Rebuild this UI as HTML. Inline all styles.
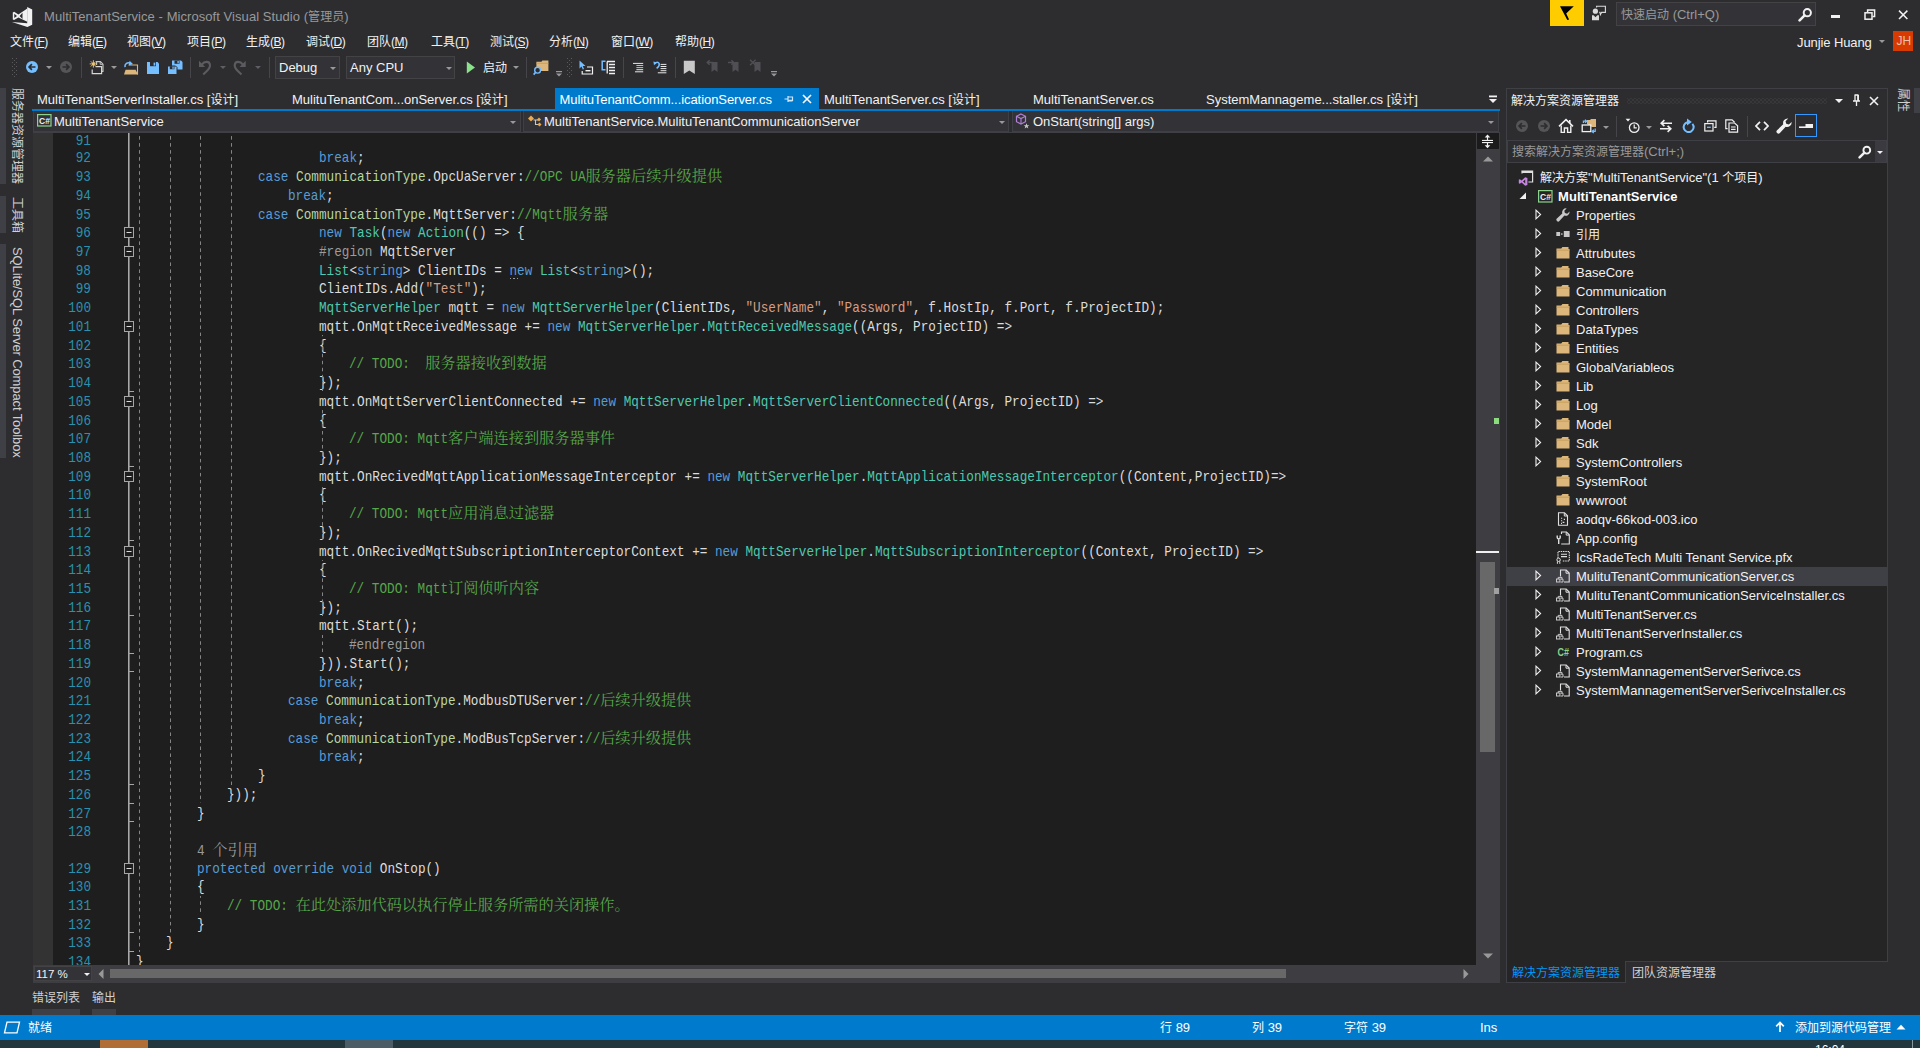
<!DOCTYPE html>
<html lang="zh-CN"><head><meta charset="utf-8"><title>MultiTenantService - Microsoft Visual Studio</title>
<style>
html,body{margin:0;padding:0}
body{width:1920px;height:1048px;overflow:hidden;position:relative;background:#2d2d30;
 font-family:"Liberation Sans","Noto Sans CJK SC",sans-serif;font-size:13px;color:#f1f1f1}
.t{position:absolute;white-space:pre;line-height:20px;height:20px}
.c{font-size:12px}
u{text-decoration:underline;text-underline-offset:1px}
#code{position:absolute;left:33px;top:133px;width:1443px;height:832px;background:#1e1e1e;overflow:hidden}
.ln{position:absolute;left:0;white-space:pre;font-family:"Liberation Mono","Noto Serif CJK SC",monospace;font-size:15px;
 line-height:19px;height:19px;transform:scaleX(0.846);transform-origin:0 0;color:#dcdcdc}

.c,.z{line-height:1px}
.ln .z{display:inline-block;font-family:"Liberation Mono","Noto Serif CJK SC","Noto Sans CJK SC",serif;font-size:15.2px;transform:scaleX(1.182);transform-origin:0 50%;white-space:pre}
.g{position:absolute;width:1px;background-image:linear-gradient(to bottom,#858585 0,#858585 3.6px,transparent 3.6px);background-size:1px 7.02px;background-repeat:repeat-y}
.no{position:absolute;white-space:pre;font-family:"Liberation Mono",monospace;font-size:15px;line-height:19px;height:19px;
 transform:scaleX(0.846);transform-origin:100% 0;color:#2b91af;text-align:right;width:60px}
.k{color:#569cd6}.y{color:#4ec9b0}.m{color:#57a64a}.s{color:#d69d85}.p{color:#9b9b9b}.e{color:#b8d7a3}
.row{position:absolute;left:0;width:379px;height:19px}
</style></head><body>

<!-- top -->
<svg style="position:absolute;left:0px;top:0px;" width="40" height="30" viewBox="0 0 40 30"><path fill="#f1f1f1" d="M27.2 6.9L32.2 9.4V24.7L27.4 26.9L11.9 22L27.2 23.3Z"/><path fill-rule="evenodd" fill="#f1f1f1" d="M27.3 8.4L18.4 14.5L14.1 11.8L12.8 12.5V19.4L14.1 20.1L18.4 17.4L27.3 21.8ZM22.5 12.8L19.6 15.9L22.5 19ZM14.3 13.7V18.1L17 15.9Z"/></svg>
<div class="t" style="left:44px;top:7px;color:#999999;font-size:13px;letter-spacing:0.06px">MultiTenantService - Microsoft Visual Studio (<span class="c">管理员</span>)</div>
<div style="position:absolute;left:1550px;top:0px;width:34px;height:26px;background:#ffcc00;"></div>
<svg style="position:absolute;left:1555px;top:0px;" width="24" height="26" viewBox="0 0 24 26"><path fill="#000000" d="M5 6.2H18.8L11.2 13.4L14.1 19.4L12.3 19.9Z"/></svg>
<svg style="position:absolute;left:1588px;top:0px;" width="22" height="26" viewBox="0 0 22 26"><circle cx="7.4" cy="11.2" r="2.6" fill="#dadada"/><path fill="#dadada" d="M4 15.2H5.6L7.5 17.2L9.4 15.2H11V20.2H4Z"/><path fill="none" stroke="#dadada" stroke-width="1.1" d="M8.6 7.6V6.3H17.4V12.4H13.6L12.4 14.6L12 12.4H11.2"/></svg>
<div style="position:absolute;left:1616px;top:2px;width:200px;height:24px;background:#333337;border:1px solid #434346;box-sizing:border-box;"></div>
<div class="t" style="left:1621px;top:5.3px;color:#999999;font-size:13px;"><span class="c">快速启动</span> (Ctrl+Q)</div>
<svg style="position:absolute;left:1798px;top:7px;" width="15" height="15" viewBox="0 0 15 15"><circle cx="9.3" cy="5.7" r="3.6" fill="none" stroke="#f1f1f1" stroke-width="2"/><path d="M6.6 8.4 L1.6 13.4" stroke="#f1f1f1" stroke-width="2.6" stroke-linecap="round"/></svg>
<div style="position:absolute;left:1831px;top:15px;width:9px;height:3px;background:#f1f1f1;"></div>
<svg style="position:absolute;left:1863.5px;top:9px;" width="12" height="12" viewBox="0 0 12 12"><path fill="none" stroke="#f1f1f1" stroke-width="1.5" d="M3.6 3V1H10.6V7.6H8.6"/><rect x="1" y="3.8" width="7" height="6.4" fill="none" stroke="#f1f1f1" stroke-width="1.5"/></svg>
<svg style="position:absolute;left:1897px;top:9px;" width="12" height="12" viewBox="0 0 12 12"><path d="M2 1.6 L10.4 10 M10.4 1.6 L2 10" stroke="#f1f1f1" stroke-width="1.5"/></svg>
<div class="t" style="left:10px;top:32px;color:#f1f1f1;font-size:12px;"><span class="c">文件</span><span style="letter-spacing:-0.5px">(<u>F</u>)</span></div>
<div class="t" style="left:68px;top:32px;color:#f1f1f1;font-size:12px;"><span class="c">编辑</span><span style="letter-spacing:-0.5px">(<u>E</u>)</span></div>
<div class="t" style="left:127px;top:32px;color:#f1f1f1;font-size:12px;"><span class="c">视图</span><span style="letter-spacing:-0.5px">(<u>V</u>)</span></div>
<div class="t" style="left:187px;top:32px;color:#f1f1f1;font-size:12px;"><span class="c">项目</span><span style="letter-spacing:-0.5px">(<u>P</u>)</span></div>
<div class="t" style="left:246px;top:32px;color:#f1f1f1;font-size:12px;"><span class="c">生成</span><span style="letter-spacing:-0.5px">(<u>B</u>)</span></div>
<div class="t" style="left:306px;top:32px;color:#f1f1f1;font-size:12px;"><span class="c">调试</span><span style="letter-spacing:-0.5px">(<u>D</u>)</span></div>
<div class="t" style="left:367px;top:32px;color:#f1f1f1;font-size:12px;"><span class="c">团队</span><span style="letter-spacing:-0.5px">(<u>M</u>)</span></div>
<div class="t" style="left:431px;top:32px;color:#f1f1f1;font-size:12px;"><span class="c">工具</span><span style="letter-spacing:-0.5px">(<u>T</u>)</span></div>
<div class="t" style="left:490px;top:32px;color:#f1f1f1;font-size:12px;"><span class="c">测试</span><span style="letter-spacing:-0.5px">(<u>S</u>)</span></div>
<div class="t" style="left:549px;top:32px;color:#f1f1f1;font-size:12px;"><span class="c">分析</span><span style="letter-spacing:-0.5px">(<u>N</u>)</span></div>
<div class="t" style="left:611px;top:32px;color:#f1f1f1;font-size:12px;"><span class="c">窗口</span><span style="letter-spacing:-0.5px">(<u>W</u>)</span></div>
<div class="t" style="left:675px;top:32px;color:#f1f1f1;font-size:12px;"><span class="c">帮助</span><span style="letter-spacing:-0.5px">(<u>H</u>)</span></div>
<div class="t" style="left:1797px;top:33px;color:#f1f1f1;font-size:13px;letter-spacing:-0.1px">Junjie Huang</div>
<svg style="position:absolute;left:1879px;top:39.5px;" width="6" height="3" viewBox="0 0 6 3"><path d="M0 0H6L3 3Z" fill="#999"/></svg>
<div style="position:absolute;left:1893px;top:31px;width:20px;height:20px;background:#d83b01;"></div>
<div class="t" style="left:1896.5px;top:31.3px;color:#efbfac;font-size:12px;">JH</div>
<svg style="position:absolute;left:12px;top:58px;" width="6" height="19" viewBox="0 0 6 19"><rect x="0" y="0" width="1" height="1" fill="#5a5a5e"/><rect x="4" y="0" width="1" height="1" fill="#5a5a5e"/><rect x="2" y="2" width="1" height="1" fill="#5a5a5e"/><rect x="2" y="2" width="1" height="1" fill="#5a5a5e"/><rect x="0" y="4" width="1" height="1" fill="#5a5a5e"/><rect x="4" y="4" width="1" height="1" fill="#5a5a5e"/><rect x="2" y="6" width="1" height="1" fill="#5a5a5e"/><rect x="2" y="6" width="1" height="1" fill="#5a5a5e"/><rect x="0" y="8" width="1" height="1" fill="#5a5a5e"/><rect x="4" y="8" width="1" height="1" fill="#5a5a5e"/><rect x="2" y="10" width="1" height="1" fill="#5a5a5e"/><rect x="2" y="10" width="1" height="1" fill="#5a5a5e"/><rect x="0" y="12" width="1" height="1" fill="#5a5a5e"/><rect x="4" y="12" width="1" height="1" fill="#5a5a5e"/><rect x="2" y="14" width="1" height="1" fill="#5a5a5e"/><rect x="2" y="14" width="1" height="1" fill="#5a5a5e"/><rect x="0" y="16" width="1" height="1" fill="#5a5a5e"/><rect x="4" y="16" width="1" height="1" fill="#5a5a5e"/><rect x="2" y="18" width="1" height="1" fill="#5a5a5e"/><rect x="2" y="18" width="1" height="1" fill="#5a5a5e"/></svg>
<svg style="position:absolute;left:26px;top:61px;" width="12" height="12" viewBox="0 0 12 12"><circle cx="6" cy="6" r="6" fill="#75beff"/><path d="M9.5 6H3.4M5.9 3.2L3.1 6L5.9 8.8" stroke="#2d2d30" stroke-width="1.7" fill="none"/></svg>
<svg style="position:absolute;left:46px;top:66px;" width="6" height="3" viewBox="0 0 6 3"><path d="M0 0H6L3 3Z" fill="#999"/></svg>
<svg style="position:absolute;left:60px;top:61px;" width="12" height="12" viewBox="0 0 12 12"><circle cx="6" cy="6" r="6" fill="#555558"/><path d="M2.5 6H8.6M6.1 3.2L8.9 6L6.1 8.8" stroke="#2d2d30" stroke-width="1.7" fill="none"/></svg>
<div style="position:absolute;left:81px;top:57px;width:1px;height:21px;background:#46464a;"></div>
<svg style="position:absolute;left:88px;top:58px;" width="18" height="18" viewBox="0 0 18 18"><g transform="translate(-88,-58)"><path d="M96.6 65V61.6H100.4L103 64.2V71.4H102" fill="none" stroke="#c8c8c8" stroke-width="1.1"/><path d="M100.2 61.8V64.4H102.8" fill="none" stroke="#c8c8c8" stroke-width="0.9"/><path d="M92.2 69.4V73.6H101.6V66.6H95.6" fill="none" stroke="#d8d8d8" stroke-width="1.2"/><path d="M93.4 60.2V67.6M89.7 63.9H97.1M90.8 61.3L96 66.5M96 61.3L90.8 66.5" stroke="#f0c674" stroke-width="0.9"/><circle cx="93.4" cy="63.9" r="1.5" fill="#f0c674"/></g></svg>
<svg style="position:absolute;left:111px;top:66px;" width="6" height="3" viewBox="0 0 6 3"><path d="M0 0H6L3 3Z" fill="#999"/></svg>
<svg style="position:absolute;left:122px;top:58px;" width="18" height="18" viewBox="0 0 18 18"><g transform="translate(-122,-58)"><path d="M128.6 65H137.5V74.4" fill="none" stroke="#dcb67a" stroke-width="1.1"/><path d="M125.6 69.8H135.6L138 74.6H124Z" fill="#dcb67a"/><path d="M125 67.2C124.4 63.6 127.6 62 130.4 63.2" fill="none" stroke="#75beff" stroke-width="1.6"/><path d="M129.6 60.8L133 64L128.8 65.4Z" fill="#75beff"/></g></svg>
<svg style="position:absolute;left:146px;top:61px;" width="14" height="14" viewBox="0 0 14 14"><path d="M1 1H11.5L13 2.5V13H1Z" fill="#75beff"/><rect x="4" y="1" width="6" height="4.2" fill="#2d2d30"/><rect x="7.6" y="1.6" width="1.7" height="3" fill="#75beff"/></svg>
<svg style="position:absolute;left:167px;top:60px;" width="16" height="15" viewBox="0 0 16 15"><path d="M5 0.5H14L15.5 2V9.5H5Z" fill="#75beff"/><rect x="7.5" y="0.5" width="5" height="3.3" fill="#2d2d30"/><rect x="10.4" y="1" width="1.4" height="2.3" fill="#75beff"/><path d="M0.5 6H8.5L10 7.5V14.5H0.5Z" fill="#75beff" stroke="#2d2d30" stroke-width="1"/><rect x="2.8" y="6.2" width="4.6" height="3" fill="#2d2d30"/><rect x="5.4" y="6.6" width="1.3" height="2.2" fill="#75beff"/></svg>
<div style="position:absolute;left:190px;top:57px;width:1px;height:21px;background:#46464a;"></div>
<svg style="position:absolute;left:196px;top:58px;" width="16" height="18" viewBox="0 0 16 18"><g transform="translate(-196,-58)"><path d="M199 60.8V67H205.2Z" fill="#5c5c60"/><path d="M201.8 64.6C204.4 61 209.6 60.8 210 65.2C210.2 69 206.4 71.4 203.2 74.4" fill="none" stroke="#5c5c60" stroke-width="2.1"/></g></svg>
<svg style="position:absolute;left:219.5px;top:66px;" width="6" height="3" viewBox="0 0 6 3"><path d="M0 0H6L3 3Z" fill="#5f5f63"/></svg>
<svg style="position:absolute;left:232px;top:58px;" width="16" height="18" viewBox="0 0 16 18"><g transform="translate(-232,-58) translate(444.7,0) scale(-1,1)"><path d="M199 60.8V67H205.2Z" fill="#5c5c60"/><path d="M201.8 64.6C204.4 61 209.6 60.8 210 65.2C210.2 69 206.4 71.4 203.2 74.4" fill="none" stroke="#5c5c60" stroke-width="2.1"/></g></svg>
<svg style="position:absolute;left:255px;top:66px;" width="6" height="3" viewBox="0 0 6 3"><path d="M0 0H6L3 3Z" fill="#5f5f63"/></svg>
<div style="position:absolute;left:268.5px;top:57px;width:1px;height:21px;background:#46464a;"></div>
<div style="position:absolute;left:275px;top:56px;width:65px;height:23px;background:#333337;border:1px solid #434346;box-sizing:border-box;"></div>
<div class="t" style="left:279px;top:58px;color:#f1f1f1;font-size:13px;">Debug</div>
<svg style="position:absolute;left:329.5px;top:66.5px;" width="6" height="3" viewBox="0 0 6 3"><path d="M0 0H6L3 3Z" fill="#999"/></svg>
<div style="position:absolute;left:346px;top:56px;width:109px;height:23px;background:#333337;border:1px solid #434346;box-sizing:border-box;"></div>
<div class="t" style="left:350px;top:58px;color:#f1f1f1;font-size:13px;">Any CPU</div>
<svg style="position:absolute;left:446px;top:66.5px;" width="6" height="3" viewBox="0 0 6 3"><path d="M0 0H6L3 3Z" fill="#999"/></svg>
<svg style="position:absolute;left:466px;top:61px;" width="10" height="13" viewBox="0 0 10 13"><path d="M0.8 0.5L9 6.5L0.8 12.5Z" fill="#8ae28a"/></svg>
<div class="t" style="left:483px;top:58px;color:#f1f1f1;font-size:13px;"><span class="c">启动</span></div>
<svg style="position:absolute;left:513px;top:66px;" width="6" height="3" viewBox="0 0 6 3"><path d="M0 0H6L3 3Z" fill="#999"/></svg>
<div style="position:absolute;left:526px;top:57px;width:1px;height:21px;background:#46464a;"></div>
<svg style="position:absolute;left:533px;top:59px;" width="16" height="17" viewBox="0 0 16 17"><path d="M3.4 9.4V2.8H8.4L9.4 1.6H15.4V12H8" fill="#dcb67a"/><path d="M3.4 4.4H15.4" stroke="#c49b58" stroke-width="0.7"/><circle cx="4.6" cy="11.2" r="2.9" fill="#2d2d30" stroke="#75beff" stroke-width="1.4"/><path d="M2.6 13.4L0.6 15.6" stroke="#75beff" stroke-width="1.7"/></svg>
<svg style="position:absolute;left:556px;top:71px;" width="6" height="6" viewBox="0 0 6 6"><rect x="0" y="0" width="6" height="1.2" fill="#999"/><path d="M0 2.6H6L3 5.6Z" fill="#999"/></svg>
<svg style="position:absolute;left:567px;top:58px;" width="6" height="19" viewBox="0 0 6 19"><rect x="0" y="0" width="1" height="1" fill="#5a5a5e"/><rect x="4" y="0" width="1" height="1" fill="#5a5a5e"/><rect x="2" y="2" width="1" height="1" fill="#5a5a5e"/><rect x="2" y="2" width="1" height="1" fill="#5a5a5e"/><rect x="0" y="4" width="1" height="1" fill="#5a5a5e"/><rect x="4" y="4" width="1" height="1" fill="#5a5a5e"/><rect x="2" y="6" width="1" height="1" fill="#5a5a5e"/><rect x="2" y="6" width="1" height="1" fill="#5a5a5e"/><rect x="0" y="8" width="1" height="1" fill="#5a5a5e"/><rect x="4" y="8" width="1" height="1" fill="#5a5a5e"/><rect x="2" y="10" width="1" height="1" fill="#5a5a5e"/><rect x="2" y="10" width="1" height="1" fill="#5a5a5e"/><rect x="0" y="12" width="1" height="1" fill="#5a5a5e"/><rect x="4" y="12" width="1" height="1" fill="#5a5a5e"/><rect x="2" y="14" width="1" height="1" fill="#5a5a5e"/><rect x="2" y="14" width="1" height="1" fill="#5a5a5e"/><rect x="0" y="16" width="1" height="1" fill="#5a5a5e"/><rect x="4" y="16" width="1" height="1" fill="#5a5a5e"/><rect x="2" y="18" width="1" height="1" fill="#5a5a5e"/><rect x="2" y="18" width="1" height="1" fill="#5a5a5e"/></svg>
<svg style="position:absolute;left:579px;top:60px;" width="15" height="15" viewBox="0 0 15 15"><path d="M0.5 0.5L6.5 6H3.8L5 9L3.8 9.5L2.5 6.6L0.5 8.4Z" fill="#75beff"/><path d="M3.2 11V14H13.5V7H8" fill="none" stroke="#f1f1f1" stroke-width="1.2"/><rect x="6.5" y="10" width="5" height="1.4" fill="#f1f1f1"/></svg>
<svg style="position:absolute;left:601px;top:60px;" width="15" height="15" viewBox="0 0 15 15"><path d="M4.5 1.2H1.2V9.8H4.5" fill="none" stroke="#75beff" stroke-width="1.5"/><path d="M6 1.5H14M8 4.5H14M8 7.5H14M8 10.5H14M8 13.5H14" stroke="#f1f1f1" stroke-width="1.3"/><path d="M6.2 1.5V13.5" stroke="#f1f1f1" stroke-width="1.3"/></svg>
<div style="position:absolute;left:623px;top:57px;width:1px;height:21px;background:#46464a;"></div>
<svg style="position:absolute;left:630px;top:58px;" width="16" height="18" viewBox="0 0 16 18"><g transform="translate(-630,-58)"><path d="M633 63.4H643.2M636.4 69.7H643.2M635 71.8H643.2" stroke="#e8e8e8" stroke-width="1"/><path d="M636.4 65.5H643.2M636.4 67.6H643.2" stroke="#8ae28a" stroke-width="1"/></g></svg>
<svg style="position:absolute;left:650px;top:58px;" width="18" height="18" viewBox="0 0 18 18"><g transform="translate(-650,-58)"><path d="M660.6 64.4H666.4M660.6 66.5H666.4M660.6 68.6H666.4M660.6 70.7H666.4M657.8 72.8H666.4" stroke="#e8e8e8" stroke-width="1"/><path d="M654.6 63.6Q657.6 60.8 659.2 63.6Q659.8 66 656.6 68.4" fill="none" stroke="#75beff" stroke-width="1.5"/><path d="M653.4 61.4L657 62.6L654 65.2Z" fill="#75beff"/></g></svg>
<div style="position:absolute;left:675px;top:57px;width:1px;height:21px;background:#46464a;"></div>
<svg style="position:absolute;left:683px;top:60px;" width="13" height="15" viewBox="0 0 13 15"><path d="M0.8 0.8H11.8V14L6.3 10.4L0.8 14Z" fill="#c8c8c8"/></svg>
<svg style="position:absolute;left:706px;top:59px;" width="13" height="15" viewBox="0 0 13 15"><path d="M5.5 3H11.5V13L8.5 10.8L5.5 13Z" fill="#4f4f54"/><path d="M7 3.5H1.5M3.6 1.2L1.2 3.5L3.6 5.8" stroke="#4f4f54" stroke-width="1.4" fill="none"/></svg>
<svg style="position:absolute;left:727px;top:59px;" width="13" height="15" viewBox="0 0 13 15"><path d="M5.5 3H11.5V13L8.5 10.8L5.5 13Z" fill="#4f4f54"/><path d="M1 3.5H6.5M4.4 1.2L6.8 3.5L4.4 5.8" stroke="#4f4f54" stroke-width="1.4" fill="none"/></svg>
<svg style="position:absolute;left:749px;top:59px;" width="13" height="15" viewBox="0 0 13 15"><path d="M5.5 3H11.5V13L8.5 10.8L5.5 13Z" fill="#4f4f54"/><path d="M1 0.8L6.6 6.2M6.6 0.8L1 6.2" stroke="#4f4f54" stroke-width="1.4" fill="none"/></svg>
<svg style="position:absolute;left:771px;top:71px;" width="6" height="6" viewBox="0 0 6 6"><rect x="0" y="0" width="6" height="1.2" fill="#999"/><path d="M0 2.6H6L3 5.6Z" fill="#999"/></svg>
<!-- left -->
<div style="position:absolute;left:0px;top:88px;width:6px;height:96px;background:#3f3f46;"></div>
<div style="position:absolute;left:0px;top:196px;width:6px;height:37px;background:#3f3f46;"></div>
<div style="position:absolute;left:0px;top:244px;width:6px;height:214px;background:#3f3f46;"></div>
<div class="t" style="left:27px;top:88px;color:#d0d0d0;transform:rotate(90deg);transform-origin:0 0"><span class="c">服务器资源管理器</span></div>
<div class="t" style="left:27px;top:196.5px;color:#d0d0d0;transform:rotate(90deg);transform-origin:0 0"><span class="c">工具箱</span></div>
<div class="t" style="left:27px;top:246.5px;color:#d0d0d0;transform:rotate(90deg);transform-origin:0 0"><span style="letter-spacing:-0.12px">SQLite/SQL Server Compact Toolbox</span></div>
<div style="position:absolute;left:1914px;top:88px;width:6px;height:25px;background:#3f3f46;"></div>
<div class="t" style="left:1912.5px;top:88px;color:#d0d0d0;transform:rotate(90deg);transform-origin:0 0"><span class="c">属性</span></div>
<!-- tabs -->
<div class="t" style="left:37px;top:90px;color:#f1f1f1;font-size:13px;">MultiTenantServerInstaller.cs [<span class="c">设计</span>]</div>
<div class="t" style="left:292px;top:90px;color:#f1f1f1;font-size:13px;">MulituTenantCom...onServer.cs [<span class="c">设计</span>]</div>
<div style="position:absolute;left:555px;top:88px;width:264px;height:22px;background:#007acc;"></div>
<div class="t" style="left:559.5px;top:90px;color:#ffffff;font-size:13px;letter-spacing:-0.06px">MulituTenantComm...icationServer.cs</div>
<svg style="position:absolute;left:784px;top:94px;" width="10" height="10" viewBox="0 0 10 10"><path d="M0.5 5H4M4 2V8M4.5 3H8.5V6.4H4.5M4.5 7H8.5" stroke="#d0e6f5" stroke-width="1.2" fill="none"/></svg>
<svg style="position:absolute;left:802px;top:94px;" width="10" height="10" viewBox="0 0 10 10"><path d="M1 1L9 9M9 1L1 9" stroke="#ffffff" stroke-width="1.6"/></svg>
<div class="t" style="left:824px;top:90px;color:#f1f1f1;font-size:13px;">MultiTenantServer.cs [<span class="c">设计</span>]</div>
<div class="t" style="left:1033px;top:90px;color:#f1f1f1;font-size:13px;">MultiTenantServer.cs</div>
<div class="t" style="left:1206px;top:90px;color:#f1f1f1;font-size:13px;">SystemMannageme...staller.cs [<span class="c">设计</span>]</div>
<svg style="position:absolute;left:1488px;top:95px;" width="10" height="9" viewBox="0 0 10 9"><rect x="1" y="0.5" width="8" height="1.8" fill="#f1f1f1"/><path d="M1 4H9L5 8Z" fill="#f1f1f1"/></svg>
<div style="position:absolute;left:32px;top:109px;width:1468px;height:2px;background:#007acc;"></div>
<div style="position:absolute;left:33px;top:111px;width:1467px;height:22px;background:#2d2d30;border-bottom:1px solid #3f3f46;box-sizing:border-box;"></div>
<div style="position:absolute;left:33px;top:111px;width:488px;height:21px;background:#333337;border:1px solid #3f3f46;border-top:none;box-sizing:border-box;"></div>
<div style="position:absolute;left:523px;top:111px;width:486px;height:21px;background:#333337;border:1px solid #3f3f46;border-top:none;box-sizing:border-box;"></div>
<div style="position:absolute;left:1012px;top:111px;width:487px;height:21px;background:#333337;border:1px solid #3f3f46;border-top:none;box-sizing:border-box;"></div>
<svg style="position:absolute;left:37px;top:114px;" width="15" height="13" viewBox="0 0 15 13"><rect x="0.6" y="0.6" width="13.4" height="11.4" fill="none" stroke="#8dd28a" stroke-width="1.2"/><text x="2" y="9.7" font-family="Liberation Sans,sans-serif" font-size="8.5" font-weight="bold" fill="#f1f1f1">C#</text></svg>
<div class="t" style="left:54px;top:112px;color:#f1f1f1;font-size:13px;">MultiTenantService</div>
<svg style="position:absolute;left:510px;top:121px;" width="6" height="3" viewBox="0 0 6 3"><path d="M0 0H6L3 3Z" fill="#999"/></svg>
<svg style="position:absolute;left:527px;top:114px;" width="16" height="15" viewBox="0 0 16 15"><path d="M1 4.5L4 1.5L7 4.5L4 7.5Z" fill="#e8ab53"/><path d="M6.5 6H11M8.5 6V10.5H11" stroke="#c8c8c8" stroke-width="1.1" fill="none"/><path d="M10 5.5L12 3.5L14 5.5L12 7.5Z" fill="#e8ab53"/><path d="M10.5 10.5L12.5 8.5L14.5 10.5L12.5 12.5Z" fill="#e8ab53"/></svg>
<div class="t" style="left:544px;top:112px;color:#f1f1f1;font-size:13px;">MultiTenantService.MulituTenantCommunicationServer</div>
<svg style="position:absolute;left:999px;top:121px;" width="6" height="3" viewBox="0 0 6 3"><path d="M0 0H6L3 3Z" fill="#999"/></svg>
<svg style="position:absolute;left:1015px;top:113px;" width="16" height="16" viewBox="0 0 16 16"><path d="M6 1L10.5 3.3V8.7L6 11L1.5 8.7V3.3Z" fill="none" stroke="#b180d7" stroke-width="1.2"/><path d="M1.5 3.3L6 5.6L10.5 3.3M6 5.6V11" fill="none" stroke="#b180d7" stroke-width="1.1"/><path d="M11.5 10.2L12.3 12.2H14.3L12.7 13.4L13.3 15.4L11.5 14.2L9.7 15.4L10.3 13.4L8.7 12.2H10.7Z" fill="#c8c8c8"/></svg>
<div class="t" style="left:1033px;top:112px;color:#f1f1f1;font-size:13px;">OnStart(string[] args)</div>
<svg style="position:absolute;left:1488px;top:121px;" width="6" height="3" viewBox="0 0 6 3"><path d="M0 0H6L3 3Z" fill="#999"/></svg>
<!-- editor -->
<div id="code">
<div style="position:absolute;left:0px;top:0px;width:20px;height:833px;background:#333333;"></div>
<div class="no" style="left:-2.5px;top:-1px">91</div>
<div class="no" style="left:-2.5px;top:16px">92</div>
<div class="ln" style="left:285.692px;top:16px"><span class="k">break</span>;</div>
<div class="no" style="left:-2.5px;top:35px">93</div>
<div class="ln" style="left:224.78px;top:35px"><span class="k">case</span> <span class="e">CommunicationType</span>.OpcUaServer:<span class="m">//OPC UA<span class="z" style="width:162.00px">服务器后续升级提供</span></span></div>
<div class="no" style="left:-2.5px;top:54px">94</div>
<div class="ln" style="left:255.236px;top:54px"><span class="k">break</span>;</div>
<div class="no" style="left:-2.5px;top:73px">95</div>
<div class="ln" style="left:224.78px;top:73px"><span class="k">case</span> <span class="e">CommunicationType</span>.MqttServer:<span class="m">//Mqtt<span class="z" style="width:54.00px">服务器</span></span></div>
<div class="no" style="left:-2.5px;top:91px">96</div>
<div class="ln" style="left:285.692px;top:91px"><span class="k">new</span> <span class="y">Task</span>(<span class="k">new</span> <span class="y">Action</span>(() =&gt; {</div>
<div class="no" style="left:-2.5px;top:110px">97</div>
<div class="ln" style="left:285.692px;top:110px"><span class="p">#region</span> MqttServer</div>
<div class="no" style="left:-2.5px;top:129px">98</div>
<div class="ln" style="left:285.692px;top:129px"><span class="y">List</span>&lt;<span class="k">string</span>&gt; ClientIDs = <span class="k">new</span> <span class="y">List</span>&lt;<span class="k">string</span>&gt;();</div>
<div class="no" style="left:-2.5px;top:147px">99</div>
<div class="ln" style="left:285.692px;top:147px">ClientIDs.Add(<span class="s">"Test"</span>);</div>
<div class="no" style="left:-2.5px;top:166px">100</div>
<div class="ln" style="left:285.692px;top:166px"><span class="y">MqttServerHelper</span> mqtt = <span class="k">new</span> <span class="y">MqttServerHelper</span>(ClientIDs, <span class="s">"UserName"</span>, <span class="s">"Password"</span>, f.HostIp, f.Port, f.ProjectID);</div>
<div class="no" style="left:-2.5px;top:185px">101</div>
<div class="ln" style="left:285.692px;top:185px">mqtt.OnMqttReceivedMessage += <span class="k">new</span> <span class="y">MqttServerHelper</span>.<span class="y">MqttReceivedMessage</span>((Args, ProjectID) =&gt;</div>
<div class="no" style="left:-2.5px;top:204px">102</div>
<div class="ln" style="left:285.692px;top:204px">{</div>
<div class="no" style="left:-2.5px;top:222px">103</div>
<div class="ln" style="left:316.148px;top:222px"><span class="m">// TODO:  <span class="z" style="width:144.00px">服务器接收到数据</span></span></div>
<div class="no" style="left:-2.5px;top:241px">104</div>
<div class="ln" style="left:285.692px;top:241px">});</div>
<div class="no" style="left:-2.5px;top:260px">105</div>
<div class="ln" style="left:285.692px;top:260px">mqtt.OnMqttServerClientConnected += <span class="k">new</span> <span class="y">MqttServerHelper</span>.<span class="y">MqttServerClientConnected</span>((Args, ProjectID) =&gt;</div>
<div class="no" style="left:-2.5px;top:279px">106</div>
<div class="ln" style="left:285.692px;top:279px">{</div>
<div class="no" style="left:-2.5px;top:297px">107</div>
<div class="ln" style="left:316.148px;top:297px"><span class="m">// TODO: Mqtt<span class="z" style="width:198.00px">客户端连接到服务器事件</span></span></div>
<div class="no" style="left:-2.5px;top:316px">108</div>
<div class="ln" style="left:285.692px;top:316px">});</div>
<div class="no" style="left:-2.5px;top:335px">109</div>
<div class="ln" style="left:285.692px;top:335px">mqtt.OnRecivedMqttApplicationMessageInterceptor += <span class="k">new</span> <span class="y">MqttServerHelper</span>.<span class="y">MqttApplicationMessageInterceptor</span>((Content,ProjectID)=&gt;</div>
<div class="no" style="left:-2.5px;top:353px">110</div>
<div class="ln" style="left:285.692px;top:353px">{</div>
<div class="no" style="left:-2.5px;top:372px">111</div>
<div class="ln" style="left:316.148px;top:372px"><span class="m">// TODO: Mqtt<span class="z" style="width:126.00px">应用消息过滤器</span></span></div>
<div class="no" style="left:-2.5px;top:391px">112</div>
<div class="ln" style="left:285.692px;top:391px">});</div>
<div class="no" style="left:-2.5px;top:410px">113</div>
<div class="ln" style="left:285.692px;top:410px">mqtt.OnRecivedMqttSubscriptionInterceptorContext += <span class="k">new</span> <span class="y">MqttServerHelper</span>.<span class="y">MqttSubscriptionInterceptor</span>((Context, ProjectID) =&gt;</div>
<div class="no" style="left:-2.5px;top:428px">114</div>
<div class="ln" style="left:285.692px;top:428px">{</div>
<div class="no" style="left:-2.5px;top:447px">115</div>
<div class="ln" style="left:316.148px;top:447px"><span class="m">// TODO: Mqtt<span class="z" style="width:108.00px">订阅侦听内容</span></span></div>
<div class="no" style="left:-2.5px;top:466px">116</div>
<div class="ln" style="left:285.692px;top:466px">});</div>
<div class="no" style="left:-2.5px;top:484px">117</div>
<div class="ln" style="left:285.692px;top:484px">mqtt.Start();</div>
<div class="no" style="left:-2.5px;top:503px">118</div>
<div class="ln" style="left:316.148px;top:503px"><span class="p">#endregion</span></div>
<div class="no" style="left:-2.5px;top:522px">119</div>
<div class="ln" style="left:285.692px;top:522px">})).Start();</div>
<div class="no" style="left:-2.5px;top:541px">120</div>
<div class="ln" style="left:285.692px;top:541px"><span class="k">break</span>;</div>
<div class="no" style="left:-2.5px;top:559px">121</div>
<div class="ln" style="left:255.236px;top:559px"><span class="k">case</span> <span class="e">CommunicationType</span>.ModbusDTUServer:<span class="m">//<span class="z" style="width:108.00px">后续升级提供</span></span></div>
<div class="no" style="left:-2.5px;top:578px">122</div>
<div class="ln" style="left:285.692px;top:578px"><span class="k">break</span>;</div>
<div class="no" style="left:-2.5px;top:597px">123</div>
<div class="ln" style="left:255.236px;top:597px"><span class="k">case</span> <span class="e">CommunicationType</span>.ModBusTcpServer:<span class="m">//<span class="z" style="width:108.00px">后续升级提供</span></span></div>
<div class="no" style="left:-2.5px;top:615px">124</div>
<div class="ln" style="left:285.692px;top:615px"><span class="k">break</span>;</div>
<div class="no" style="left:-2.5px;top:634px">125</div>
<div class="ln" style="left:224.78px;top:634px">}</div>
<div class="no" style="left:-2.5px;top:653px">126</div>
<div class="ln" style="left:194.324px;top:653px">}));</div>
<div class="no" style="left:-2.5px;top:672px">127</div>
<div class="ln" style="left:163.868px;top:672px">}</div>
<div class="no" style="left:-2.5px;top:690px">128</div>
<div class="no" style="left:-2.5px;top:727px">129</div>
<div class="ln" style="left:163.868px;top:727px"><span class="k">protected</span> <span class="k">override</span> <span class="k">void</span> OnStop()</div>
<div class="no" style="left:-2.5px;top:745px">130</div>
<div class="ln" style="left:163.868px;top:745px">{</div>
<div class="no" style="left:-2.5px;top:764px">131</div>
<div class="ln" style="left:194.324px;top:764px"><span class="m">// TODO: <span class="z" style="width:396.00px">在此处添加代码以执行停止服务所需的关闭操作。</span></span></div>
<div class="no" style="left:-2.5px;top:783px">132</div>
<div class="ln" style="left:163.868px;top:783px">}</div>
<div class="no" style="left:-2.5px;top:801px">133</div>
<div class="ln" style="left:133.412px;top:801px">}</div>
<div class="no" style="left:-2.5px;top:820px">134</div>
<div class="ln" style="left:102.956px;top:820px">}</div>
<div class="ln" style="left:163.868px;top:709.3px;color:#999999">4 <span class="z" style="width:54.00px">个引用</span></div>
<div style="position:absolute;left:477.042px;top:144.82px;width:1.4px;height:1.4px;background:#9a9a9a;"></div>
<div style="position:absolute;left:480.442px;top:144.82px;width:1.4px;height:1.4px;background:#9a9a9a;"></div>
<div style="position:absolute;left:483.842px;top:144.82px;width:1.4px;height:1.4px;background:#9a9a9a;"></div>
<div style="position:absolute;left:95px;top:0px;width:2px;height:833px;background:linear-gradient(to right,#a9a9a9 50%,#6f6f6f 50%);"></div>
<svg style="position:absolute;left:91px;top:94px;" width="10" height="11" viewBox="0 0 10 11"><rect x="0.5" y="0.5" width="9" height="10" fill="#1e1e1e" stroke="#a5a5a5"/><path d="M2.5 5.5H7.5" stroke="#dcdcdc" stroke-width="1"/></svg>
<svg style="position:absolute;left:91px;top:113px;" width="10" height="11" viewBox="0 0 10 11"><rect x="0.5" y="0.5" width="9" height="10" fill="#1e1e1e" stroke="#a5a5a5"/><path d="M2.5 5.5H7.5" stroke="#dcdcdc" stroke-width="1"/></svg>
<svg style="position:absolute;left:91px;top:188px;" width="10" height="11" viewBox="0 0 10 11"><rect x="0.5" y="0.5" width="9" height="10" fill="#1e1e1e" stroke="#a5a5a5"/><path d="M2.5 5.5H7.5" stroke="#dcdcdc" stroke-width="1"/></svg>
<svg style="position:absolute;left:91px;top:263px;" width="10" height="11" viewBox="0 0 10 11"><rect x="0.5" y="0.5" width="9" height="10" fill="#1e1e1e" stroke="#a5a5a5"/><path d="M2.5 5.5H7.5" stroke="#dcdcdc" stroke-width="1"/></svg>
<svg style="position:absolute;left:91px;top:338px;" width="10" height="11" viewBox="0 0 10 11"><rect x="0.5" y="0.5" width="9" height="10" fill="#1e1e1e" stroke="#a5a5a5"/><path d="M2.5 5.5H7.5" stroke="#dcdcdc" stroke-width="1"/></svg>
<svg style="position:absolute;left:91px;top:413px;" width="10" height="11" viewBox="0 0 10 11"><rect x="0.5" y="0.5" width="9" height="10" fill="#1e1e1e" stroke="#a5a5a5"/><path d="M2.5 5.5H7.5" stroke="#dcdcdc" stroke-width="1"/></svg>
<svg style="position:absolute;left:91px;top:730px;" width="10" height="11" viewBox="0 0 10 11"><rect x="0.5" y="0.5" width="9" height="10" fill="#1e1e1e" stroke="#a5a5a5"/><path d="M2.5 5.5H7.5" stroke="#dcdcdc" stroke-width="1"/></svg>
<div style="position:absolute;left:95px;top:258px;width:6px;height:1px;background:#a5a5a5;"></div>
<div style="position:absolute;left:95px;top:333px;width:6px;height:1px;background:#a5a5a5;"></div>
<div style="position:absolute;left:95px;top:407px;width:6px;height:1px;background:#a5a5a5;"></div>
<div style="position:absolute;left:95px;top:482px;width:6px;height:1px;background:#a5a5a5;"></div>
<div style="position:absolute;left:95px;top:520px;width:6px;height:1px;background:#a5a5a5;"></div>
<div style="position:absolute;left:95px;top:538px;width:6px;height:1px;background:#a5a5a5;"></div>
<div style="position:absolute;left:95px;top:651px;width:6px;height:1px;background:#a5a5a5;"></div>
<div style="position:absolute;left:95px;top:670px;width:6px;height:1px;background:#a5a5a5;"></div>
<div style="position:absolute;left:95px;top:688px;width:6px;height:1px;background:#a5a5a5;"></div>
<div style="position:absolute;left:95px;top:799px;width:6px;height:1px;background:#a5a5a5;"></div>
<div style="position:absolute;left:95px;top:818px;width:6px;height:1px;background:#a5a5a5;"></div>
<div class="g" style="left:106px;top:0px;height:819px;background-position:0 3.15px"></div>
<div class="g" style="left:137px;top:0px;height:800px;background-position:0 3.15px"></div>
<div class="g" style="left:167px;top:0px;height:670px;background-position:0 3.15px"></div>
<div class="g" style="left:198px;top:0px;height:652px;background-position:0 3.15px"></div>
<div class="g" style="left:289px;top:202px;height:56px;background-position:0 4.73px"></div>
<div class="g" style="left:289px;top:277px;height:56px;background-position:0 6.95px"></div>
<div class="g" style="left:289px;top:352px;height:56px;background-position:0 2.15px"></div>
<div class="g" style="left:289px;top:427px;height:56px;background-position:0 4.37px"></div>
<div class="g" style="left:289px;top:502px;height:19px;background-position:0 6.59px"></div>
<div class="g" style="left:167px;top:763px;height:18px;background-position:0 5.33px"></div>
</div>
<!-- scroll -->
<div style="position:absolute;left:1476px;top:133px;width:24px;height:832px;background:#3e3e42;"></div>
<div style="position:absolute;left:1477px;top:133px;width:22px;height:16px;background:#1b1b1c;"></div>
<svg style="position:absolute;left:1481px;top:134px;" width="13" height="15" viewBox="0 0 13 15"><path d="M6.5 0.6L9.3 3.6H7.1V6H5.9V3.6H3.7Z" fill="#f1f1f1"/><rect x="1" y="5.9" width="11" height="1.1" fill="#f1f1f1"/><rect x="1" y="8" width="11" height="1.1" fill="#f1f1f1"/><path d="M6.5 14.2L9.3 11.2H7.1V9H5.9V11.2H3.7Z" fill="#f1f1f1"/></svg>
<svg style="position:absolute;left:1482.5px;top:155.5px;" width="10" height="6" viewBox="0 0 10 6"><path d="M0 5.5L5 0.5L10 5.5Z" fill="#999"/></svg>
<svg style="position:absolute;left:1483px;top:953px;" width="10" height="6" viewBox="0 0 10 6"><path d="M0 0.5L5 5.5L10 0.5Z" fill="#999"/></svg>
<div style="position:absolute;left:1480px;top:562px;width:15px;height:190px;background:#686868;"></div>
<div style="position:absolute;left:1476px;top:551px;width:23px;height:2px;background:#f0f0f0;"></div>
<div style="position:absolute;left:1494px;top:418px;width:5px;height:6px;background:#8ddb7f;"></div>
<div style="position:absolute;left:1494px;top:588px;width:5px;height:6px;background:#a0a0a0;"></div>
<div style="position:absolute;left:33px;top:965px;width:1443px;height:18px;background:#3e3e42;"></div>
<div style="position:absolute;left:34px;top:966px;width:58px;height:15px;background:#333337;border:1px solid #434346;box-sizing:border-box;"></div>
<div class="t" style="left:36px;top:964px;color:#f1f1f1;font-size:11.5px;">117 %</div>
<svg style="position:absolute;left:84px;top:972.5px;" width="6" height="3" viewBox="0 0 6 3"><path d="M0 0H6L3 3Z" fill="#f1f1f1"/></svg>
<svg style="position:absolute;left:98px;top:969px;" width="6" height="10" viewBox="0 0 6 10"><path d="M5.5 0L0.5 5L5.5 10Z" fill="#999"/></svg>
<svg style="position:absolute;left:1463px;top:969px;" width="6" height="10" viewBox="0 0 6 10"><path d="M0.5 0L5.5 5L0.5 10Z" fill="#999"/></svg>
<div style="position:absolute;left:110px;top:969px;width:1176px;height:9px;background:#686868;"></div>
<div style="position:absolute;left:1476px;top:965px;width:24px;height:18px;background:#3e3e42;"></div>
<!-- bottom -->
<div class="t" style="left:32px;top:988px;color:#d0d0d0;font-size:13px;"><span class="c">错误列表</span></div>
<div class="t" style="left:92px;top:988px;color:#d0d0d0;font-size:13px;"><span class="c">输出</span></div>
<div style="position:absolute;left:32px;top:1009px;width:48px;height:7px;background:#3f3f46;"></div>
<div style="position:absolute;left:92px;top:1009px;width:24px;height:7px;background:#3f3f46;"></div>
<div style="position:absolute;left:0px;top:1015px;width:1920px;height:25px;background:#007acc;"></div>
<svg style="position:absolute;left:3px;top:1021px;" width="18" height="13" viewBox="0 0 18 13"><path d="M4 1.2H16.5L14 11.8H1.5Z" fill="none" stroke="#ffffff" stroke-width="1.3"/></svg>
<div class="t" style="left:28px;top:1018px;color:#ffffff;font-size:13px;"><span class="c">就绪</span></div>
<div class="t" style="left:1160px;top:1018px;color:#ffffff;font-size:13px;"><span class="c">行</span> 89</div>
<div class="t" style="left:1252px;top:1018px;color:#ffffff;font-size:13px;"><span class="c">列</span> 39</div>
<div class="t" style="left:1344px;top:1018px;color:#ffffff;font-size:13px;"><span class="c">字符</span> 39</div>
<div class="t" style="left:1480px;top:1018px;color:#ffffff;font-size:13px;">Ins</div>
<svg style="position:absolute;left:1775px;top:1021px;" width="10" height="12" viewBox="0 0 10 12"><path d="M5 11V2M1.2 5.4L5 1.4L8.8 5.4" stroke="#ffffff" stroke-width="1.7" fill="none"/></svg>
<div class="t" style="left:1795px;top:1018px;color:#ffffff;font-size:13px;"><span class="c">添加到源代码管理</span></div>
<svg style="position:absolute;left:1896px;top:1024px;" width="10" height="6" viewBox="0 0 10 6"><path d="M0.5 5.5L5 0.8L9.5 5.5Z" fill="#ffffff"/></svg>
<div style="position:absolute;left:0px;top:1040px;width:1920px;height:8px;background:#22363e;"></div>
<div style="position:absolute;left:100px;top:1040px;width:48px;height:8px;background:#b06d36;"></div>
<div style="position:absolute;left:345px;top:1040px;width:48px;height:8px;background:#4b5d66;"></div>
<div class="t" style="left:1815px;top:1043px;color:#ffffff;font-size:12px;height:5px;overflow:hidden;line-height:14px">16:04</div>
<div style="position:absolute;left:1912px;top:1040px;width:1px;height:8px;background:#8a979c;"></div>
<!-- se -->
<div style="position:absolute;left:1506px;top:88px;width:382px;height:874px;background:#252526;border:1px solid #3f3f46;box-sizing:border-box;"></div>
<div style="position:absolute;left:1507px;top:89px;width:380px;height:74px;background:#2d2d30;"></div>
<div class="t" style="left:1511px;top:90.5px;color:#f1f1f1;font-size:13px;"><span class="c">解决方案资源管理器</span></div>
<div style="position:absolute;left:1627px;top:98px;width:200px;height:6px;opacity:.5;background-image:radial-gradient(circle,#5c5c60 0.6px,transparent 0.8px),radial-gradient(circle,#5c5c60 0.6px,transparent 0.8px);background-size:4px 4px;background-position:0 0,2px 2px"></div>
<svg style="position:absolute;left:1834.5px;top:98.5px;" width="8" height="4" viewBox="0 0 8 4"><path d="M0 0H8L4 4Z" fill="#f1f1f1"/></svg>
<svg style="position:absolute;left:1852px;top:94px;" width="9" height="13" viewBox="0 0 9 13"><path d="M2.5 1H6.5M3 1V6.5M6.3 1V6.5M1 7H8M4.5 7V12" stroke="#f1f1f1" stroke-width="1.3" fill="none"/><rect x="5.2" y="1" width="1.5" height="6" fill="#f1f1f1"/></svg>
<svg style="position:absolute;left:1869px;top:96px;" width="10" height="10" viewBox="0 0 10 10"><path d="M1 1L9 9M9 1L1 9" stroke="#f1f1f1" stroke-width="1.6"/></svg>
<svg style="position:absolute;left:1516px;top:120px;" width="12" height="12" viewBox="0 0 12 12"><circle cx="6" cy="6" r="6" fill="#555558"/><path d="M9.5 6H3.4M5.9 3.2L3.1 6L5.9 8.8" stroke="#2d2d30" stroke-width="1.7" fill="none"/></svg>
<svg style="position:absolute;left:1538px;top:120px;" width="12" height="12" viewBox="0 0 12 12"><circle cx="6" cy="6" r="6" fill="#555558"/><path d="M2.5 6H8.6M6.1 3.2L8.9 6L6.1 8.8" stroke="#2d2d30" stroke-width="1.7" fill="none"/></svg>
<svg style="position:absolute;left:1558px;top:118px;" width="16" height="16" viewBox="0 0 16 16"><path d="M1 8.4L8 1.6L15 8.4" fill="none" stroke="#f1f1f1" stroke-width="1.5"/><path d="M3.2 7.6V14.4H6.4V10H9.6V14.4H12.8V7.6" fill="none" stroke="#f1f1f1" stroke-width="1.4"/><rect x="11" y="2" width="1.6" height="3" fill="#f1f1f1"/></svg>
<svg style="position:absolute;left:1581px;top:118px;" width="16" height="16" viewBox="0 0 16 16"><path d="M6 6V2H9L10 1H15V9H11" fill="#dcb67a"/><rect x="1.2" y="7" width="8.6" height="6.6" fill="#2d2d30" stroke="#f1f1f1" stroke-width="1.3"/><path d="M2.4 5V3.2H4.6M4 1.6L5.8 3.2L4 4.8" stroke="#75beff" stroke-width="1.2" fill="none"/><path d="M14.2 10.6V13.4H12M12.8 11.8L11 13.4L12.8 15" stroke="#75beff" stroke-width="1.2" fill="none"/></svg>
<svg style="position:absolute;left:1603px;top:125.5px;" width="6" height="3" viewBox="0 0 6 3"><path d="M0 0H6L3 3Z" fill="#999"/></svg>
<div style="position:absolute;left:1616px;top:116px;width:1px;height:21px;background:#46464a;"></div>
<svg style="position:absolute;left:1625px;top:118px;" width="16" height="16" viewBox="0 0 16 16"><path d="M0.6 0.8H5.4L3 3.6Z" fill="#f1f1f1"/><circle cx="9.2" cy="9.6" r="4.8" fill="none" stroke="#f1f1f1" stroke-width="1.3"/><path d="M9.2 6.6V9.8H11.8" fill="none" stroke="#f1f1f1" stroke-width="1.2"/></svg>
<svg style="position:absolute;left:1646px;top:125.5px;" width="6" height="3" viewBox="0 0 6 3"><path d="M0 0H6L3 3Z" fill="#999"/></svg>
<svg style="position:absolute;left:1659px;top:119px;" width="14" height="14" viewBox="0 0 14 14"><path d="M13 4.2H2.4M5.4 1.2L2.2 4.2L5.4 7.2" stroke="#f1f1f1" stroke-width="1.6" fill="none"/><path d="M1 9.8H11.6M8.6 6.8L11.8 9.8L8.6 12.8" stroke="#f1f1f1" stroke-width="1.6" fill="none"/></svg>
<svg style="position:absolute;left:1681px;top:118px;" width="14" height="16" viewBox="0 0 14 16"><path d="M11.4 5.8A5 5 0 1 1 6.6 4.2" fill="none" stroke="#75beff" stroke-width="2"/><path d="M6 0.4L10.8 4L6 7.6Z" fill="#75beff"/></svg>
<svg style="position:absolute;left:1704px;top:120px;" width="13" height="12" viewBox="0 0 13 12"><path d="M3.6 2.4V0.8H12V7.4H10.2" fill="none" stroke="#f1f1f1" stroke-width="1.2"/><rect x="0.8" y="3.6" width="8.2" height="7.4" fill="none" stroke="#f1f1f1" stroke-width="1.2"/><path d="M3 7.3H6.8" stroke="#75beff" stroke-width="1.3"/></svg>
<svg style="position:absolute;left:1725px;top:119px;" width="15" height="14" viewBox="0 0 15 14"><path d="M2.6 9.6H0.8V0.8H7L9.6 3.2" fill="none" stroke="#f1f1f1" stroke-width="1.2"/><path d="M4 13.2V4H9.6L12.6 6.8V13.2Z" fill="none" stroke="#f1f1f1" stroke-width="1.2"/><path d="M6 8H10.6M6 10.4H10.6" stroke="#f1f1f1" stroke-width="1.1"/></svg>
<div style="position:absolute;left:1747px;top:116px;width:1px;height:21px;background:#46464a;"></div>
<svg style="position:absolute;left:1755px;top:121px;" width="14" height="10" viewBox="0 0 14 10"><path d="M5 0.8L1 5L5 9.2M9 0.8L13 5L9 9.2" fill="none" stroke="#f1f1f1" stroke-width="1.7"/></svg>
<svg style="position:absolute;left:1776px;top:118px;" width="16" height="16" viewBox="0 0 16 16"><g transform="scale(1.15)"><path d="M13.6 3.4A4 4 0 0 1 8.4 7.6L3.4 13A1.7 1.7 0 0 1 0.9 10.6L6.3 5.5A4 4 0 0 1 10.6 0.4L8.3 2.8L8.9 5L11.2 5.7Z" fill="#f1f1f1"/></g></svg>
<div style="position:absolute;left:1795px;top:114px;width:22px;height:23px;background:#2d2d30;border:1px solid #3399ff;box-sizing:border-box;"></div>
<svg style="position:absolute;left:1799px;top:123px;" width="14" height="6" viewBox="0 0 14 6"><rect x="0" y="3.4" width="14" height="1.6" fill="#f1f1f1"/><rect x="6.5" y="1" width="7.5" height="3" fill="#f1f1f1"/></svg>
<div style="position:absolute;left:1507px;top:140px;width:380px;height:23px;background:#2d2d30;border:1px solid #3f3f46;box-sizing:border-box;"></div>
<div style="position:absolute;left:1875px;top:141px;width:11px;height:21px;background:#3a3a40;"></div>
<div class="t" style="left:1512px;top:142px;color:#999999;font-size:13px;"><span class="c">搜索解决方案资源管理器</span>(Ctrl+;)</div>
<svg style="position:absolute;left:1858px;top:145px;" width="14" height="14" viewBox="0 0 14 14"><circle cx="8.8" cy="5.2" r="3.4" fill="none" stroke="#f1f1f1" stroke-width="1.9"/><path d="M6.2 7.8L1.6 12.4" stroke="#f1f1f1" stroke-width="2.5" stroke-linecap="round"/></svg>
<svg style="position:absolute;left:1877px;top:150.5px;" width="6" height="3" viewBox="0 0 6 3"><path d="M0 0H6L3 3Z" fill="#f1f1f1"/></svg>
<div style="position:absolute;left:1507px;top:567px;width:380px;height:19px;background:#3f3f46;"></div>
<svg style="position:absolute;left:1518px;top:170px;" width="16" height="16" viewBox="0 0 16 16"><path d="M4 3.4V1H14.6V12H10.4" fill="none" stroke="#e0e0e0" stroke-width="1.2"/><rect x="4" y="1" width="10.6" height="2" fill="#e0e0e0"/><path fill-rule="evenodd" fill="#c586e0" d="M7.2 7.2L9.4 8V15L7.2 15.8L3.6 12.4L1.8 13.8L0.8 13.3V9.7L1.8 9.2L3.6 10.6ZM7.2 9.6L5 11.5L7.2 13.4Z"/></svg>
<div class="t" style="left:1540px;top:167.5px;color:#f1f1f1;font-size:13px;"><span class="c">解决方案</span>"MultiTenantService"(1 <span class="c">个项目</span>)</div>
<svg style="position:absolute;left:1519px;top:192px;" width="8" height="8" viewBox="0 0 8 8"><path d="M7 0.5V7H0.5Z" fill="#f1f1f1"/></svg>
<svg style="position:absolute;left:1538px;top:190px;" width="15" height="13" viewBox="0 0 15 13"><rect x="0.6" y="0.6" width="13.4" height="11.4" fill="none" stroke="#8dd28a" stroke-width="1.2"/><text x="2" y="9.7" font-family="Liberation Sans,sans-serif" font-size="8.5" font-weight="bold" fill="#f1f1f1">C#</text></svg>
<div class="t" style="left:1558px;top:186.5px;color:#ffffff;font-size:13px;font-weight:bold;letter-spacing:0.08px">MultiTenantService</div>
<svg style="position:absolute;left:1535px;top:209px;" width="7" height="11" viewBox="0 0 7 11"><path d="M1 1.2L5.6 5.5L1 9.8Z" fill="none" stroke="#f1f1f1" stroke-width="1.1"/></svg>
<svg style="position:absolute;left:1556px;top:208px;" width="14" height="15" viewBox="0 0 14 15"><path d="M13.6 3.4A4 4 0 0 1 8.4 7.6L3.4 13A1.7 1.7 0 0 1 0.9 10.6L6.3 5.5A4 4 0 0 1 10.6 0.4L8.3 2.8L8.9 5L11.2 5.7Z" fill="#c8c8c8"/></svg>
<div class="t" style="left:1576px;top:205.5px;color:#f1f1f1;font-size:13px;">Properties</div>
<svg style="position:absolute;left:1535px;top:228px;" width="7" height="11" viewBox="0 0 7 11"><path d="M1 1.2L5.6 5.5L1 9.8Z" fill="none" stroke="#f1f1f1" stroke-width="1.1"/></svg>
<svg style="position:absolute;left:1556px;top:227px;" width="14" height="15" viewBox="0 0 14 15"><rect x="0.3" y="5" width="3.8" height="4" fill="#c8c8c8"/><rect x="5" y="6.4" width="1.6" height="1.3" fill="#c8c8c8"/><rect x="7.8" y="4" width="5.8" height="6" fill="#c8c8c8"/></svg>
<div class="t" style="left:1576px;top:224.5px;color:#f1f1f1;font-size:13px;"><span class="c">引用</span></div>
<svg style="position:absolute;left:1535px;top:247px;" width="7" height="11" viewBox="0 0 7 11"><path d="M1 1.2L5.6 5.5L1 9.8Z" fill="none" stroke="#f1f1f1" stroke-width="1.1"/></svg>
<svg style="position:absolute;left:1556px;top:246px;" width="14" height="15" viewBox="0 0 14 15"><path d="M0.5 2.5H5.2L6.4 1H12.5V3H13.5V12.5H0.5Z" fill="#dcb67a"/><path d="M0.5 4.2H13.5" stroke="#c49b58" stroke-width="0.8"/></svg>
<div class="t" style="left:1576px;top:243.5px;color:#f1f1f1;font-size:13px;">Attrubutes</div>
<svg style="position:absolute;left:1535px;top:266px;" width="7" height="11" viewBox="0 0 7 11"><path d="M1 1.2L5.6 5.5L1 9.8Z" fill="none" stroke="#f1f1f1" stroke-width="1.1"/></svg>
<svg style="position:absolute;left:1556px;top:265px;" width="14" height="15" viewBox="0 0 14 15"><path d="M0.5 2.5H5.2L6.4 1H12.5V3H13.5V12.5H0.5Z" fill="#dcb67a"/><path d="M0.5 4.2H13.5" stroke="#c49b58" stroke-width="0.8"/></svg>
<div class="t" style="left:1576px;top:262.5px;color:#f1f1f1;font-size:13px;">BaseCore</div>
<svg style="position:absolute;left:1535px;top:285px;" width="7" height="11" viewBox="0 0 7 11"><path d="M1 1.2L5.6 5.5L1 9.8Z" fill="none" stroke="#f1f1f1" stroke-width="1.1"/></svg>
<svg style="position:absolute;left:1556px;top:284px;" width="14" height="15" viewBox="0 0 14 15"><path d="M0.5 2.5H5.2L6.4 1H12.5V3H13.5V12.5H0.5Z" fill="#dcb67a"/><path d="M0.5 4.2H13.5" stroke="#c49b58" stroke-width="0.8"/></svg>
<div class="t" style="left:1576px;top:281.5px;color:#f1f1f1;font-size:13px;">Communication</div>
<svg style="position:absolute;left:1535px;top:304px;" width="7" height="11" viewBox="0 0 7 11"><path d="M1 1.2L5.6 5.5L1 9.8Z" fill="none" stroke="#f1f1f1" stroke-width="1.1"/></svg>
<svg style="position:absolute;left:1556px;top:303px;" width="14" height="15" viewBox="0 0 14 15"><path d="M0.5 2.5H5.2L6.4 1H12.5V3H13.5V12.5H0.5Z" fill="#dcb67a"/><path d="M0.5 4.2H13.5" stroke="#c49b58" stroke-width="0.8"/></svg>
<div class="t" style="left:1576px;top:300.5px;color:#f1f1f1;font-size:13px;">Controllers</div>
<svg style="position:absolute;left:1535px;top:323px;" width="7" height="11" viewBox="0 0 7 11"><path d="M1 1.2L5.6 5.5L1 9.8Z" fill="none" stroke="#f1f1f1" stroke-width="1.1"/></svg>
<svg style="position:absolute;left:1556px;top:322px;" width="14" height="15" viewBox="0 0 14 15"><path d="M0.5 2.5H5.2L6.4 1H12.5V3H13.5V12.5H0.5Z" fill="#dcb67a"/><path d="M0.5 4.2H13.5" stroke="#c49b58" stroke-width="0.8"/></svg>
<div class="t" style="left:1576px;top:319.5px;color:#f1f1f1;font-size:13px;">DataTypes</div>
<svg style="position:absolute;left:1535px;top:342px;" width="7" height="11" viewBox="0 0 7 11"><path d="M1 1.2L5.6 5.5L1 9.8Z" fill="none" stroke="#f1f1f1" stroke-width="1.1"/></svg>
<svg style="position:absolute;left:1556px;top:341px;" width="14" height="15" viewBox="0 0 14 15"><path d="M0.5 2.5H5.2L6.4 1H12.5V3H13.5V12.5H0.5Z" fill="#dcb67a"/><path d="M0.5 4.2H13.5" stroke="#c49b58" stroke-width="0.8"/></svg>
<div class="t" style="left:1576px;top:338.5px;color:#f1f1f1;font-size:13px;">Entities</div>
<svg style="position:absolute;left:1535px;top:361px;" width="7" height="11" viewBox="0 0 7 11"><path d="M1 1.2L5.6 5.5L1 9.8Z" fill="none" stroke="#f1f1f1" stroke-width="1.1"/></svg>
<svg style="position:absolute;left:1556px;top:360px;" width="14" height="15" viewBox="0 0 14 15"><path d="M0.5 2.5H5.2L6.4 1H12.5V3H13.5V12.5H0.5Z" fill="#dcb67a"/><path d="M0.5 4.2H13.5" stroke="#c49b58" stroke-width="0.8"/></svg>
<div class="t" style="left:1576px;top:357.5px;color:#f1f1f1;font-size:13px;">GlobalVariableos</div>
<svg style="position:absolute;left:1535px;top:380px;" width="7" height="11" viewBox="0 0 7 11"><path d="M1 1.2L5.6 5.5L1 9.8Z" fill="none" stroke="#f1f1f1" stroke-width="1.1"/></svg>
<svg style="position:absolute;left:1556px;top:379px;" width="14" height="15" viewBox="0 0 14 15"><path d="M0.5 2.5H5.2L6.4 1H12.5V3H13.5V12.5H0.5Z" fill="#dcb67a"/><path d="M0.5 4.2H13.5" stroke="#c49b58" stroke-width="0.8"/></svg>
<div class="t" style="left:1576px;top:376.5px;color:#f1f1f1;font-size:13px;">Lib</div>
<svg style="position:absolute;left:1535px;top:399px;" width="7" height="11" viewBox="0 0 7 11"><path d="M1 1.2L5.6 5.5L1 9.8Z" fill="none" stroke="#f1f1f1" stroke-width="1.1"/></svg>
<svg style="position:absolute;left:1556px;top:398px;" width="14" height="15" viewBox="0 0 14 15"><path d="M0.5 2.5H5.2L6.4 1H12.5V3H13.5V12.5H0.5Z" fill="#dcb67a"/><path d="M0.5 4.2H13.5" stroke="#c49b58" stroke-width="0.8"/></svg>
<div class="t" style="left:1576px;top:395.5px;color:#f1f1f1;font-size:13px;">Log</div>
<svg style="position:absolute;left:1535px;top:418px;" width="7" height="11" viewBox="0 0 7 11"><path d="M1 1.2L5.6 5.5L1 9.8Z" fill="none" stroke="#f1f1f1" stroke-width="1.1"/></svg>
<svg style="position:absolute;left:1556px;top:417px;" width="14" height="15" viewBox="0 0 14 15"><path d="M0.5 2.5H5.2L6.4 1H12.5V3H13.5V12.5H0.5Z" fill="#dcb67a"/><path d="M0.5 4.2H13.5" stroke="#c49b58" stroke-width="0.8"/></svg>
<div class="t" style="left:1576px;top:414.5px;color:#f1f1f1;font-size:13px;">Model</div>
<svg style="position:absolute;left:1535px;top:437px;" width="7" height="11" viewBox="0 0 7 11"><path d="M1 1.2L5.6 5.5L1 9.8Z" fill="none" stroke="#f1f1f1" stroke-width="1.1"/></svg>
<svg style="position:absolute;left:1556px;top:436px;" width="14" height="15" viewBox="0 0 14 15"><path d="M0.5 2.5H5.2L6.4 1H12.5V3H13.5V12.5H0.5Z" fill="#dcb67a"/><path d="M0.5 4.2H13.5" stroke="#c49b58" stroke-width="0.8"/></svg>
<div class="t" style="left:1576px;top:433.5px;color:#f1f1f1;font-size:13px;">Sdk</div>
<svg style="position:absolute;left:1535px;top:456px;" width="7" height="11" viewBox="0 0 7 11"><path d="M1 1.2L5.6 5.5L1 9.8Z" fill="none" stroke="#f1f1f1" stroke-width="1.1"/></svg>
<svg style="position:absolute;left:1556px;top:455px;" width="14" height="15" viewBox="0 0 14 15"><path d="M0.5 2.5H5.2L6.4 1H12.5V3H13.5V12.5H0.5Z" fill="#dcb67a"/><path d="M0.5 4.2H13.5" stroke="#c49b58" stroke-width="0.8"/></svg>
<div class="t" style="left:1576px;top:452.5px;color:#f1f1f1;font-size:13px;">SystemControllers</div>
<svg style="position:absolute;left:1556px;top:474px;" width="14" height="15" viewBox="0 0 14 15"><path d="M0.5 2.5H5.2L6.4 1H12.5V3H13.5V12.5H0.5Z" fill="#dcb67a"/><path d="M0.5 4.2H13.5" stroke="#c49b58" stroke-width="0.8"/></svg>
<div class="t" style="left:1576px;top:471.5px;color:#f1f1f1;font-size:13px;">SystemRoot</div>
<svg style="position:absolute;left:1556px;top:493px;" width="14" height="15" viewBox="0 0 14 15"><path d="M0.5 2.5H5.2L6.4 1H12.5V3H13.5V12.5H0.5Z" fill="#dcb67a"/><path d="M0.5 4.2H13.5" stroke="#c49b58" stroke-width="0.8"/></svg>
<div class="t" style="left:1576px;top:490.5px;color:#f1f1f1;font-size:13px;">wwwroot</div>
<svg style="position:absolute;left:1556px;top:512px;" width="14" height="15" viewBox="0 0 14 15"><path d="M2.5 0.8H8.5L11.5 3.8V13.2H2.5Z" fill="none" stroke="#e0e0e0" stroke-width="1.1"/><path d="M8.3 1V4H11.3" fill="none" stroke="#e0e0e0" stroke-width="1"/><path d="M5 6.2H6.2M7.8 7.4H9M5 8.8H6.2M6.6 10.4H8.4M5 11.4H6" stroke="#e0e0e0" stroke-width="1.1"/></svg>
<div class="t" style="left:1576px;top:509.5px;color:#f1f1f1;font-size:13px;">aodqv-66kod-003.ico</div>
<svg style="position:absolute;left:1556px;top:531px;" width="14" height="15" viewBox="0 0 14 15"><path d="M5.5 3V1H10.5L13.3 3.8V13H5.2" fill="none" stroke="#e0e0e0" stroke-width="1.1"/><path d="M10.2 1.2V4.1H13" fill="none" stroke="#e0e0e0" stroke-width="1"/><path d="M1.2 4.5V6.6Q1.2 8 2.7 8T4.2 6.6V4.5M2.7 8V13" fill="none" stroke="#e0e0e0" stroke-width="1.4"/></svg>
<div class="t" style="left:1576px;top:528.5px;color:#f1f1f1;font-size:13px;">App.config</div>
<svg style="position:absolute;left:1556px;top:550px;" width="14" height="15" viewBox="0 0 14 15"><path d="M2 8V1.5H13.3V11H6" fill="none" stroke="#e0e0e0" stroke-width="1.1" stroke-dasharray="1.5 0.8"/><path d="M5 4.3H11M5 6.6H11" stroke="#e0e0e0" stroke-width="1.1"/><circle cx="2.6" cy="9.8" r="1.7" fill="none" stroke="#e0e0e0" stroke-width="1"/><path d="M1.4 11.4V13.8M3.8 11.4V13.8" stroke="#e0e0e0" stroke-width="1"/></svg>
<div class="t" style="left:1576px;top:547.5px;color:#f1f1f1;font-size:13px;">IcsRadeTech Multi Tenant Service.pfx</div>
<svg style="position:absolute;left:1535px;top:570px;" width="7" height="11" viewBox="0 0 7 11"><path d="M1 1.2L5.6 5.5L1 9.8Z" fill="none" stroke="#f1f1f1" stroke-width="1.1"/></svg>
<svg style="position:absolute;left:1556px;top:569px;" width="14" height="15" viewBox="0 0 14 15"><path d="M4.5 7.5V1H10.2L13.2 4V13H8" fill="none" stroke="#e0e0e0" stroke-width="1.1"/><path d="M10 1.2V4.2H13" fill="none" stroke="#e0e0e0" stroke-width="1"/><rect x="0.5" y="10" width="3.4" height="3" fill="none" stroke="#c8c8c8" stroke-width="1"/><path d="M2.2 10V8.4H6V10M4.6 10.2H7V13H4.6" fill="none" stroke="#c8c8c8" stroke-width="1"/></svg>
<div class="t" style="left:1576px;top:566.5px;color:#f1f1f1;font-size:13px;">MulituTenantCommunicationServer.cs</div>
<svg style="position:absolute;left:1535px;top:589px;" width="7" height="11" viewBox="0 0 7 11"><path d="M1 1.2L5.6 5.5L1 9.8Z" fill="none" stroke="#f1f1f1" stroke-width="1.1"/></svg>
<svg style="position:absolute;left:1556px;top:588px;" width="14" height="15" viewBox="0 0 14 15"><path d="M4.5 7.5V1H10.2L13.2 4V13H8" fill="none" stroke="#e0e0e0" stroke-width="1.1"/><path d="M10 1.2V4.2H13" fill="none" stroke="#e0e0e0" stroke-width="1"/><rect x="0.5" y="10" width="3.4" height="3" fill="none" stroke="#c8c8c8" stroke-width="1"/><path d="M2.2 10V8.4H6V10M4.6 10.2H7V13H4.6" fill="none" stroke="#c8c8c8" stroke-width="1"/></svg>
<div class="t" style="left:1576px;top:585.5px;color:#f1f1f1;font-size:13px;">MulituTenantCommunicationServiceInstaller.cs</div>
<svg style="position:absolute;left:1535px;top:608px;" width="7" height="11" viewBox="0 0 7 11"><path d="M1 1.2L5.6 5.5L1 9.8Z" fill="none" stroke="#f1f1f1" stroke-width="1.1"/></svg>
<svg style="position:absolute;left:1556px;top:607px;" width="14" height="15" viewBox="0 0 14 15"><path d="M4.5 7.5V1H10.2L13.2 4V13H8" fill="none" stroke="#e0e0e0" stroke-width="1.1"/><path d="M10 1.2V4.2H13" fill="none" stroke="#e0e0e0" stroke-width="1"/><rect x="0.5" y="10" width="3.4" height="3" fill="none" stroke="#c8c8c8" stroke-width="1"/><path d="M2.2 10V8.4H6V10M4.6 10.2H7V13H4.6" fill="none" stroke="#c8c8c8" stroke-width="1"/></svg>
<div class="t" style="left:1576px;top:604.5px;color:#f1f1f1;font-size:13px;">MultiTenantServer.cs</div>
<svg style="position:absolute;left:1535px;top:627px;" width="7" height="11" viewBox="0 0 7 11"><path d="M1 1.2L5.6 5.5L1 9.8Z" fill="none" stroke="#f1f1f1" stroke-width="1.1"/></svg>
<svg style="position:absolute;left:1556px;top:626px;" width="14" height="15" viewBox="0 0 14 15"><path d="M4.5 7.5V1H10.2L13.2 4V13H8" fill="none" stroke="#e0e0e0" stroke-width="1.1"/><path d="M10 1.2V4.2H13" fill="none" stroke="#e0e0e0" stroke-width="1"/><rect x="0.5" y="10" width="3.4" height="3" fill="none" stroke="#c8c8c8" stroke-width="1"/><path d="M2.2 10V8.4H6V10M4.6 10.2H7V13H4.6" fill="none" stroke="#c8c8c8" stroke-width="1"/></svg>
<div class="t" style="left:1576px;top:623.5px;color:#f1f1f1;font-size:13px;">MultiTenantServerInstaller.cs</div>
<svg style="position:absolute;left:1535px;top:646px;" width="7" height="11" viewBox="0 0 7 11"><path d="M1 1.2L5.6 5.5L1 9.8Z" fill="none" stroke="#f1f1f1" stroke-width="1.1"/></svg>
<svg style="position:absolute;left:1556px;top:645px;" width="14" height="15" viewBox="0 0 14 15"><text x="1.4" y="10.8" font-family="Liberation Sans,sans-serif" font-size="10.5" font-weight="bold" fill="#8dd28a" textLength="11.5" lengthAdjust="spacingAndGlyphs">C#</text></svg>
<div class="t" style="left:1576px;top:642.5px;color:#f1f1f1;font-size:13px;">Program.cs</div>
<svg style="position:absolute;left:1535px;top:665px;" width="7" height="11" viewBox="0 0 7 11"><path d="M1 1.2L5.6 5.5L1 9.8Z" fill="none" stroke="#f1f1f1" stroke-width="1.1"/></svg>
<svg style="position:absolute;left:1556px;top:664px;" width="14" height="15" viewBox="0 0 14 15"><path d="M4.5 7.5V1H10.2L13.2 4V13H8" fill="none" stroke="#e0e0e0" stroke-width="1.1"/><path d="M10 1.2V4.2H13" fill="none" stroke="#e0e0e0" stroke-width="1"/><rect x="0.5" y="10" width="3.4" height="3" fill="none" stroke="#c8c8c8" stroke-width="1"/><path d="M2.2 10V8.4H6V10M4.6 10.2H7V13H4.6" fill="none" stroke="#c8c8c8" stroke-width="1"/></svg>
<div class="t" style="left:1576px;top:661.5px;color:#f1f1f1;font-size:13px;">SystemMannagementServerSerivce.cs</div>
<svg style="position:absolute;left:1535px;top:684px;" width="7" height="11" viewBox="0 0 7 11"><path d="M1 1.2L5.6 5.5L1 9.8Z" fill="none" stroke="#f1f1f1" stroke-width="1.1"/></svg>
<svg style="position:absolute;left:1556px;top:683px;" width="14" height="15" viewBox="0 0 14 15"><path d="M4.5 7.5V1H10.2L13.2 4V13H8" fill="none" stroke="#e0e0e0" stroke-width="1.1"/><path d="M10 1.2V4.2H13" fill="none" stroke="#e0e0e0" stroke-width="1"/><rect x="0.5" y="10" width="3.4" height="3" fill="none" stroke="#c8c8c8" stroke-width="1"/><path d="M2.2 10V8.4H6V10M4.6 10.2H7V13H4.6" fill="none" stroke="#c8c8c8" stroke-width="1"/></svg>
<div class="t" style="left:1576px;top:680.5px;color:#f1f1f1;font-size:13px;">SystemMannagementServerSerivceInstaller.cs</div>
<div style="position:absolute;left:1506px;top:961px;width:120px;height:22px;background:#252526;border:1px solid #3f3f46;border-top:none;box-sizing:border-box;"></div>
<div class="t" style="left:1512px;top:963px;color:#0097fb;font-size:13px;"><span class="c">解决方案资源管理器</span></div>
<div class="t" style="left:1632px;top:963px;color:#d0d0d0;font-size:13px;"><span class="c">团队资源管理器</span></div>
</body></html>
